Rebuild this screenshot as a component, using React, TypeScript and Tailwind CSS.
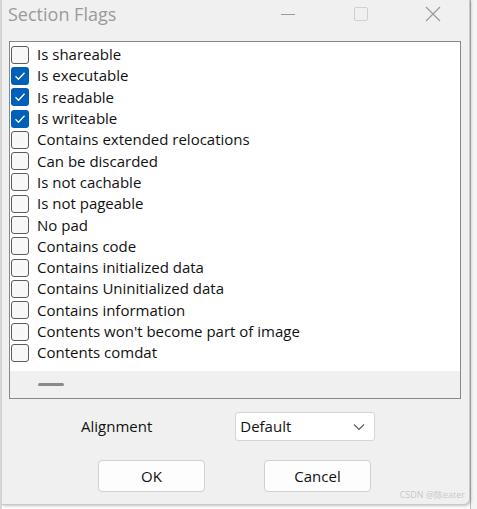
import React from 'react'

const flags = [
    { label: 'Is shareable', checked: false },
    { label: 'Is executable', checked: true },
    { label: 'Is readable', checked: true },
    { label: 'Is writeable', checked: true },
    { label: 'Contains extended relocations', checked: false },
    { label: 'Can be discarded', checked: false },
    { label: 'Is not cachable', checked: false },
    { label: 'Is not pageable', checked: false },
    { label: 'No pad', checked: false },
    { label: 'Contains code', checked: false },
    { label: 'Contains initialized data', checked: false },
    { label: 'Contains Uninitialized data', checked: false },
    { label: 'Contains information', checked: false },
    { label: "Contents won't become part of image", checked: false },
    { label: 'Contents comdat', checked: false },
]

const Box: React.FC<{ checked: boolean }> = ({ checked }) =>
    checked ? (
        <div className="w-[18px] h-[18px] rounded-[3px] bg-[#005fb8] flex items-center justify-center">
            <svg width="12" height="10" viewBox="0 0 12 10">
                <path d="M1.5 5.2 L4.5 8.2 L10.5 1.8" fill="none" stroke="white" strokeWidth="1.3" />
            </svg>
        </div>
    ) : (
        <div className="w-[18px] h-[18px] rounded-[3px] border border-[#5c5c5c] bg-[#f7f7f7]" />
    )

const App: React.FC = () => {
    return (
        <div className="w-[477px] h-[509px] bg-white flex overflow-hidden font-['Open_Sans','Noto_Sans',sans-serif] text-[#111]">
            <div className="w-[2px] shrink-0 bg-[#d8d8d8]" />
            <div className="relative w-[468px] h-[505px] shrink-0 bg-[#f0f0f0] border-r border-b border-[#c8c8c8] rounded-br-[6px] shadow-[1px_1px_3px_rgba(0,0,0,0.25)] flex flex-col">
                <div className="h-[28px] shrink-0 flex items-center">
                    <span className="ml-[6px] text-[18px] text-[#9a9a9a]">Section Flags</span>
                    <div className="ml-auto flex items-center">
                        <div className="w-[74px] flex justify-center">
                            <div className="w-[14px] h-px bg-[#9a9a9a]" />
                        </div>
                        <div className="w-[72px] flex justify-center">
                            <div className="w-[14px] h-[14px] border border-[#d0d0d0] rounded-[2px]" />
                        </div>
                        <div className="w-[72px] flex justify-center">
                            <svg width="16" height="16" viewBox="0 0 16 16">
                                <path d="M1 1 L15 15 M15 1 L1 15" stroke="#9a9a9a" strokeWidth="1.2" />
                            </svg>
                        </div>
                    </div>
                </div>
                <div className="mt-[13px] ml-[7px] w-[452px] h-[358px] shrink-0 border border-[#828790] bg-white flex flex-col">
                    <div className="pt-[2px] h-[329px] shrink-0">
                        {flags.map(f => (
                            <div key={f.label} className="h-[21.3px] flex items-center pl-[1px]">
                                <Box checked={f.checked} />
                                <span className="ml-[8px] text-[15px] leading-none">{f.label}</span>
                            </div>
                        ))}
                    </div>
                    <div className="flex-1 bg-[#f0f0f0] flex items-center pl-[28px] pb-[1px]">
                        <div className="w-[26px] h-[3px] rounded-full bg-[#8a8a8a]" />
                    </div>
                </div>
                <div className="mt-[13px] shrink-0 flex items-center">
                    <span className="ml-[79px] text-[15px]">Alignment</span>
                    <div className="ml-[83px] w-[140px] h-[29px] bg-white border border-[#d5d5d5] rounded-[3px] flex items-center px-[4px]">
                        <span className="text-[15px]">Default</span>
                        <svg className="ml-auto mr-[5px]" width="12" height="8" viewBox="0 0 12 8">
                            <path d="M1 1.5 L6 6.5 L11 1.5" fill="none" stroke="#555" strokeWidth="1.1" />
                        </svg>
                    </div>
                </div>
                <div className="mt-[19px] shrink-0 flex">
                    <button className="ml-[96px] w-[107px] h-[32px] bg-[#fdfdfd] border border-[#d0d0d0] rounded-[4px] text-[15px]">
                        OK
                    </button>
                    <button className="ml-[59px] w-[107px] h-[32px] bg-[#fdfdfd] border border-[#d0d0d0] rounded-[4px] text-[15px]">
                        Cancel
                    </button>
                </div>
                <div className="absolute right-[4px] bottom-[3px] text-[9px] text-[#c8c8c8]">CSDN @陈eater</div>
            </div>
            <div className="flex-1 bg-[#f4f4f4] border-l border-[#bbb]" />
        </div>
    )
}

export default App
